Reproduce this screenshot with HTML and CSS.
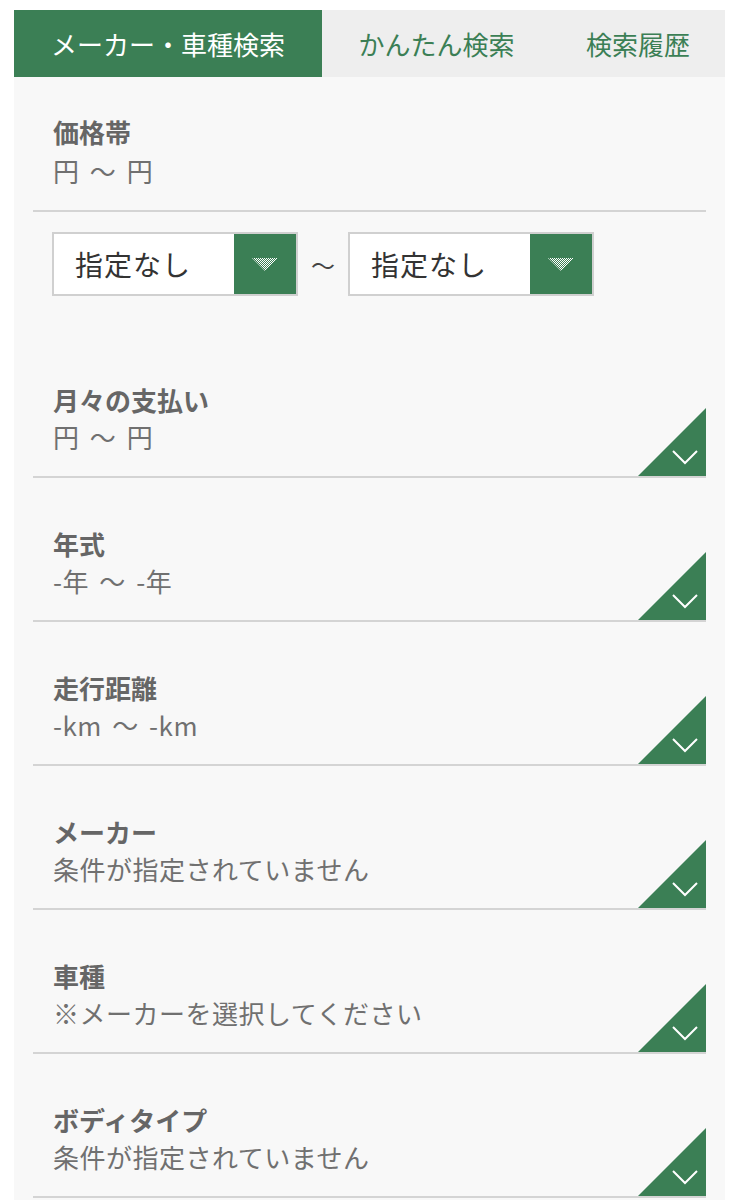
FILE: index.html
```html
<!DOCTYPE html>
<html lang="ja">
<head>
  <meta charset="UTF-8">
  <title>メーカー・車種検索</title>
  <link rel="stylesheet" href="styles.css">
</head>
<body>

  <div class="search-box">
    <div class="tabs">
      <div class="tab active">メーカー・車種検索</div>
      <div class="tab tab-easy">かんたん検索</div>
      <div class="tab tab-history">検索履歴</div>
    </div>

    <div class="price-head">
      <p class="item-title">価格帯</p>
      <p class="item-value">円 〜 円</p>
    </div>

    <div class="price-row">
      <div class="select">
        <span class="select-label">指定なし</span>
        <span class="select-btn">
          <svg width="26" height="13" viewBox="0 0 26 13">
            <defs>
              <pattern id="dots" width="2" height="2" patternUnits="userSpaceOnUse">
                <rect width="1" height="1" fill="#fff"/>
                <rect x="1" y="1" width="1" height="1" fill="#fff"/>
              </pattern>
            </defs>
            <polygon points="0,0 26,0 13,13" fill="url(#dots)"/>
          </svg>
        </span>
      </div>
      <span class="range-sep">〜</span>
      <div class="select">
        <span class="select-label">指定なし</span>
        <span class="select-btn">
          <svg width="26" height="13" viewBox="0 0 26 13">
            <polygon points="0,0 26,0 13,13" fill="url(#dots)"/>
          </svg>
        </span>
      </div>
    </div>

    <div class="item">
      <p class="item-title">月々の支払い</p>
      <p class="item-value">円 〜 円</p>
      <span class="corner"><svg width="68" height="68" viewBox="0 0 68 68"><polygon points="68,0 68,68 0,68" fill="#3b7f55"/><polyline points="35,43 47,55 59,43" fill="none" stroke="#fff" stroke-width="2"/></svg></span>
    </div>

    <div class="item">
      <p class="item-title">年式</p>
      <p class="item-value">-年 〜 -年</p>
      <span class="corner"><svg width="68" height="68" viewBox="0 0 68 68"><polygon points="68,0 68,68 0,68" fill="#3b7f55"/><polyline points="35,43 47,55 59,43" fill="none" stroke="#fff" stroke-width="2"/></svg></span>
    </div>

    <div class="item">
      <p class="item-title">走行距離</p>
      <p class="item-value">-km 〜 -km</p>
      <span class="corner"><svg width="68" height="68" viewBox="0 0 68 68"><polygon points="68,0 68,68 0,68" fill="#3b7f55"/><polyline points="35,43 47,55 59,43" fill="none" stroke="#fff" stroke-width="2"/></svg></span>
    </div>

    <div class="item">
      <p class="item-title">メーカー</p>
      <p class="item-value">条件が指定されていません</p>
      <span class="corner"><svg width="68" height="68" viewBox="0 0 68 68"><polygon points="68,0 68,68 0,68" fill="#3b7f55"/><polyline points="35,43 47,55 59,43" fill="none" stroke="#fff" stroke-width="2"/></svg></span>
    </div>

    <div class="item">
      <p class="item-title">車種</p>
      <p class="item-value">※メーカーを選択してください</p>
      <span class="corner"><svg width="68" height="68" viewBox="0 0 68 68"><polygon points="68,0 68,68 0,68" fill="#3b7f55"/><polyline points="35,43 47,55 59,43" fill="none" stroke="#fff" stroke-width="2"/></svg></span>
    </div>

    <div class="item">
      <p class="item-title">ボディタイプ</p>
      <p class="item-value">条件が指定されていません</p>
      <span class="corner"><svg width="68" height="68" viewBox="0 0 68 68"><polygon points="68,0 68,68 0,68" fill="#3b7f55"/><polyline points="35,43 47,55 59,43" fill="none" stroke="#fff" stroke-width="2"/></svg></span>
    </div>
  </div>

</body>
</html>
```

FILE: styles.css
```css
body {
  margin: 0;
  background-color: #fff;
  font-family: "Noto Sans CJK JP", "Noto Sans", sans-serif;
  color: #6b6b6b;
}

p {
  margin: 0;
}

.search-box {
  margin: 10px 15px 0 14px;
  background-color: #f8f8f8;
  padding-bottom: 40px;
}

/* タブ */
.tabs {
  display: flex;
  height: 67px;
  background-color: #eeeeee;
}

.tab {
  font-size: 26px;
  line-height: 67px;
  text-align: center;
  color: #3b7f55;
  white-space: nowrap;
}

.tab.active {
  flex: 0 0 308px;
  background-color: #3b7f55;
  color: #fff;
}

.tab-easy {
  flex: 0 0 229px;
}

.tab-history {
  flex: 1;
}

.item-title {
  font-size: 26px;
  font-weight: bold;
  line-height: 32px;
  color: #666;
}

.item-value {
  font-size: 26px;
  line-height: 32px;
  margin-top: 5px;
  letter-spacing: 0.5px;
  word-spacing: 4px;
  color: #707070;
}

/* 価格帯 */
.price-head {
  margin: 0 19px;
  padding: 39px 20px 23px;
  border-bottom: 2px solid #d4d4d4;
}

.price-head .item-value {
  margin-top: 7px;
}

.price-row {
  display: flex;
  align-items: center;
  margin: 20px 0 0 38px;
}

.select {
  display: flex;
  width: 246px;
  height: 64px;
  box-sizing: border-box;
  border: 2px solid #d0d0d0;
  background-color: #fff;
}

.select-label {
  flex: 1;
  padding-left: 21px;
  font-size: 28px;
  line-height: 60px;
  letter-spacing: 1px;
  color: #333;
}

.select-btn {
  display: flex;
  align-items: center;
  justify-content: center;
  width: 62px;
  background-color: #3b7f55;
}

.range-sep {
  width: 50px;
  text-align: center;
  font-size: 24px;
  color: #444;
}

/* アコーディオン */
.item {
  position: relative;
  margin: 0 19px;
  padding: 50px 20px 23px;
  border-bottom: 2px solid #d4d4d4;
}

.price-row + .item {
  margin-top: 38px;
}

.corner {
  position: absolute;
  right: 0;
  bottom: 0;
  width: 68px;
  height: 68px;
}

.corner svg {
  display: block;
}
```
